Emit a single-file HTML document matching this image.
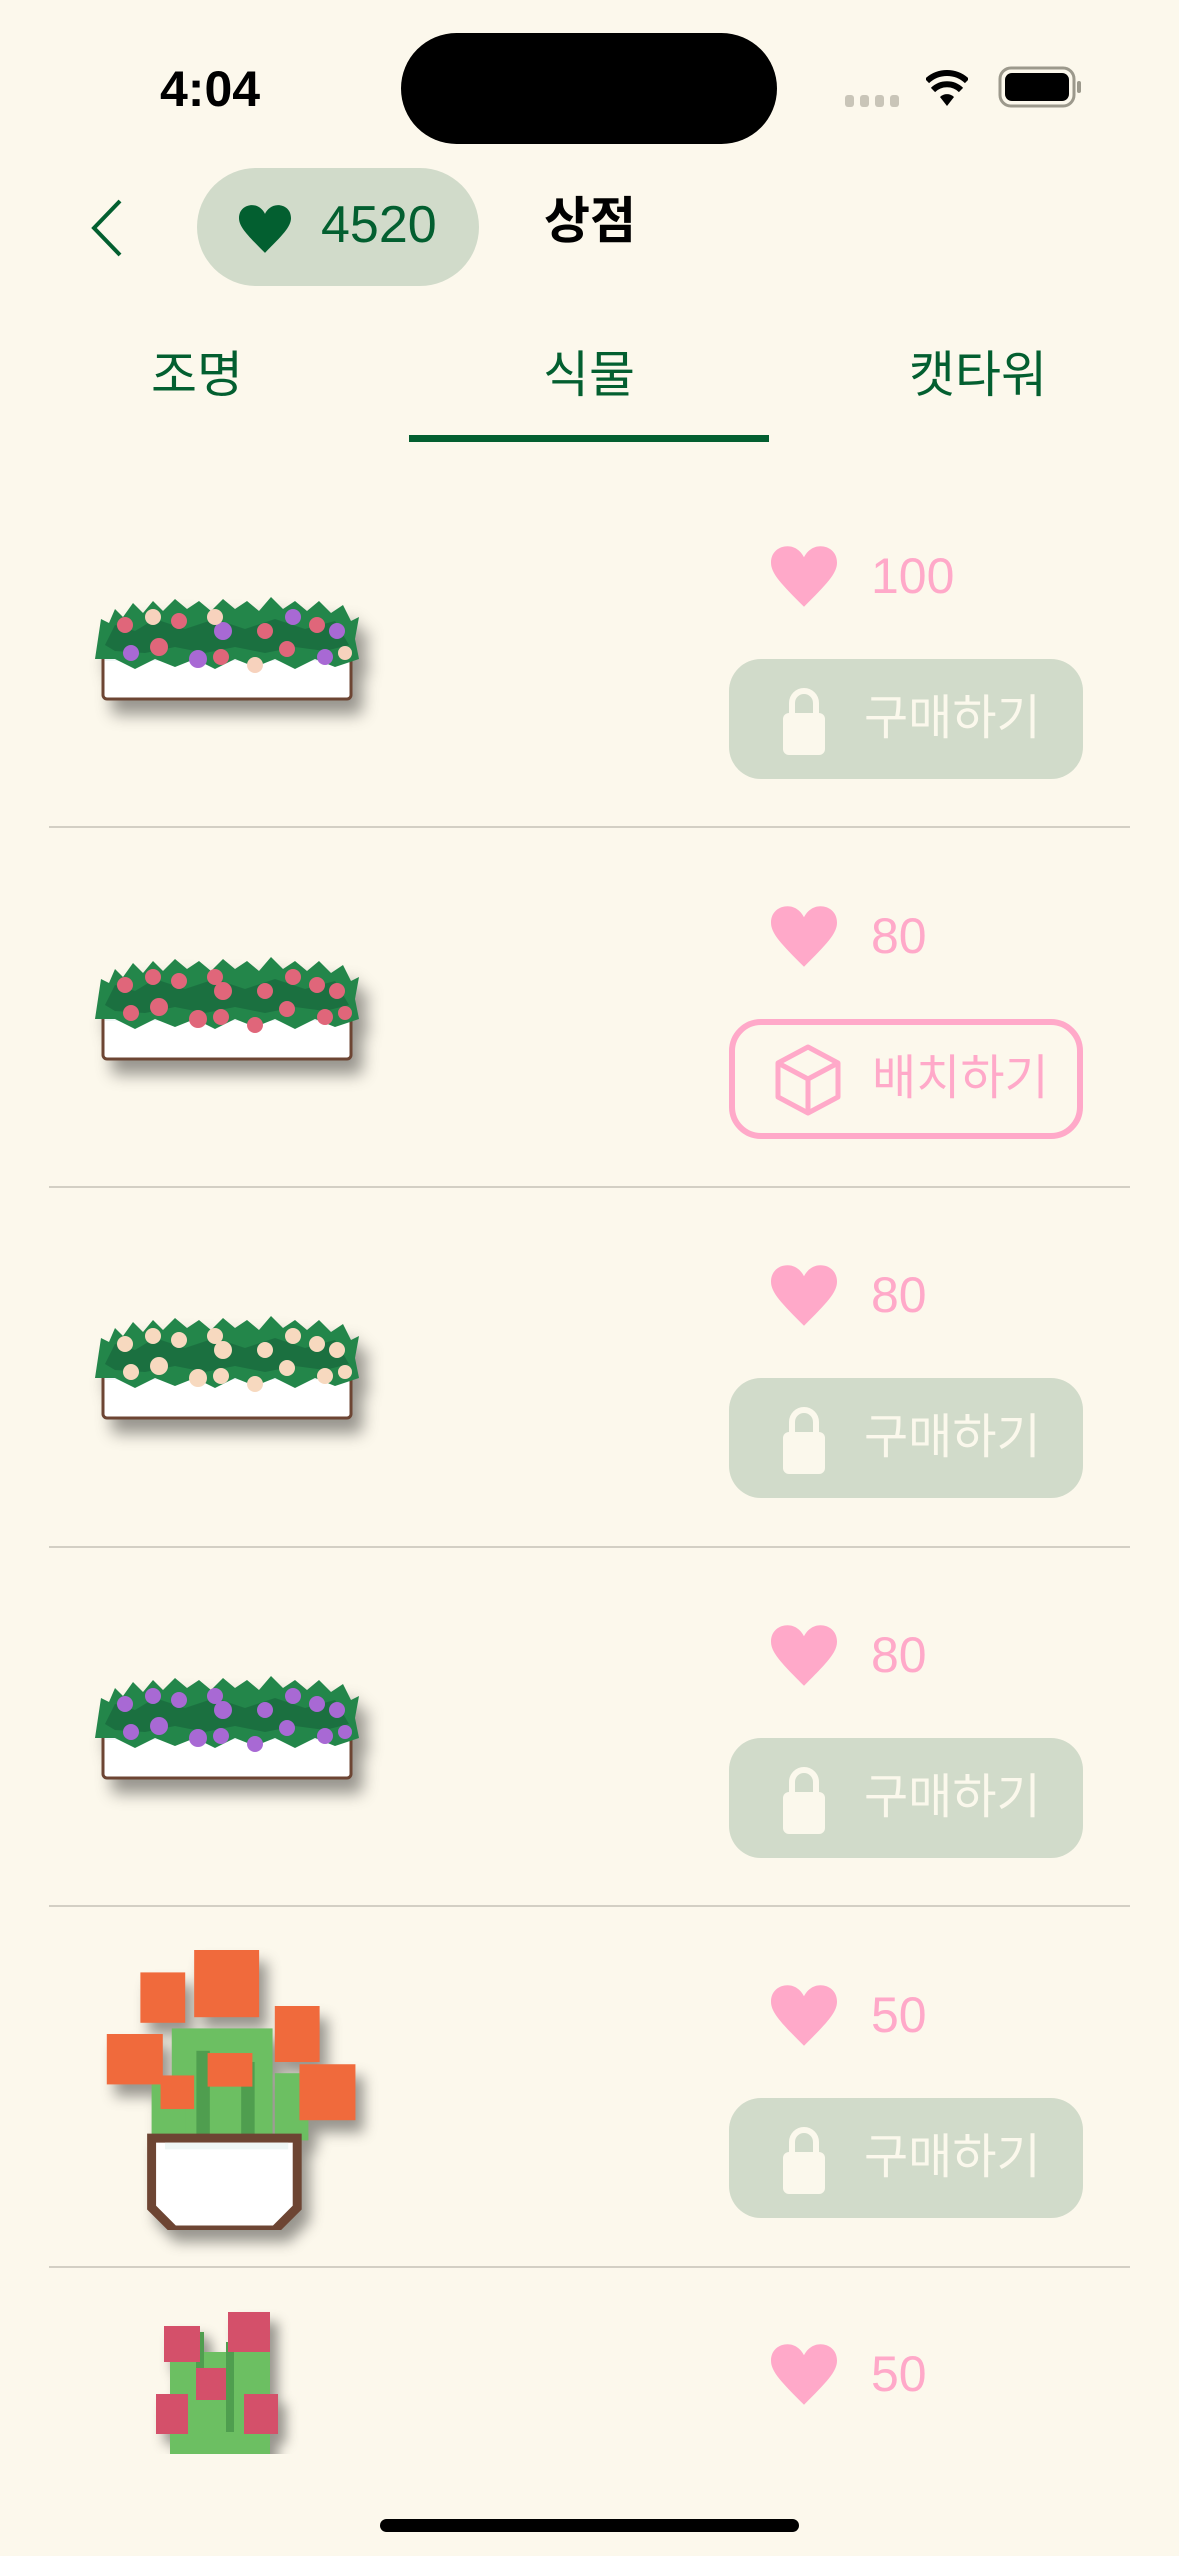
<!DOCTYPE html>
<html><head><meta charset="utf-8">
<style>
*{margin:0;padding:0;box-sizing:border-box}
body{width:1179px;height:2556px;background:#fcf8ec;position:relative;overflow:hidden;font-family:"Liberation Sans","Noto Sans CJK KR",sans-serif}
.a{position:absolute}
.tab{position:absolute;top:335px;font-size:50px;color:#035f30;transform:translateX(-50%);white-space:nowrap}
.sep{position:absolute;left:49px;width:1081px;height:2px;background:#d3cfc4}
.price{position:absolute;left:871px;font-size:50px;color:#ffa9c9;line-height:1}
.btn{position:absolute;left:729px;width:354px;height:120px;border-radius:32px;background:#d1dbca;color:#fbf8ec;font-size:48px}
.btn span{position:absolute;left:135px;top:50%;transform:translateY(-50%);line-height:1}
.btn.o{background:none;border:6px solid #ffa9c9;color:#ffa9c9}
.btn.o span{left:137px}
</style></head><body>
<div class="a" style="left:160px;top:60px;font-size:50px;font-weight:bold;color:#000">4:04</div>
<div class="a" style="left:401px;top:33px;width:376px;height:111px;border-radius:56px;background:#000"></div>
<div class="a" style="left:845px;top:95px">
<svg width="60" height="14"><g fill="#c9c5b8"><rect x="0" y="0" width="9" height="12" rx="3"/><rect x="15" y="0" width="9" height="12" rx="3"/><rect x="30" y="0" width="9" height="12" rx="3"/><rect x="45" y="0" width="9" height="12" rx="3"/></g></svg></div>
<svg class="a" style="left:926px;top:68px" width="42" height="38" viewBox="0 0 42 38"><path d="M21 38 L14 29 A10 10 0 0 1 28 29Z" fill="#000"/><path d="M7 22 A20 20 0 0 1 35 22" stroke="#000" stroke-width="6" fill="none"/><path d="M1 13 A29 29 0 0 1 41 13" stroke="#000" stroke-width="6" fill="none"/></svg>
<svg class="a" style="left:998px;top:66px" width="84" height="42" viewBox="0 0 84 42"><rect x="2" y="2" width="74" height="38" rx="11" fill="none" stroke="#9c998c" stroke-width="3"/><rect x="7" y="7" width="64" height="28" rx="7" fill="#000"/><rect x="79" y="15" width="4" height="12" rx="2" fill="#9c998c"/></svg>
<svg class="a" style="left:88px;top:198px" width="36" height="60" viewBox="0 0 36 60"><path d="M32 3 L6 30 L32 57" fill="none" stroke="#035f30" stroke-width="4"/></svg>
<div class="a" style="left:197px;top:168px;width:282px;height:118px;border-radius:59px;background:#d1dbca"></div>
<svg class="a" style="left:239px;top:205px" width="52" height="48" viewBox="0 0 24 22"><path d="M12 22 C4 14 0 10 0 6 C0 2 3 0 6 0 C9 0 11 2 12 4 C13 2 15 0 18 0 C21 0 24 2 24 6 C24 10 20 14 12 22Z" fill="#035f30"/></svg>
<div class="a" style="left:321px;top:199px;font-size:52px;color:#035f30;line-height:1">4520</div>
<div class="a" style="left:544px;top:196px;font-size:50px;font-weight:bold;color:#000;line-height:1">상점</div>
<div class="tab" style="left:197px">조명</div>
<div class="tab" style="left:589px">식물</div>
<div class="tab" style="left:978px">캣타워</div>
<div class="a" style="left:409px;top:435px;width:360px;height:7px;background:#035f30"></div>

<svg width="0" height="0" style="position:absolute">
<defs>
<symbol id="box" viewBox="0 0 264 106">
<rect x="8" y="56" width="248" height="48" rx="4" fill="#fff" stroke="#6d4533" stroke-width="3"/>
<rect x="10" y="58" width="244" height="8" fill="#eef6f5"/>
<path d="M0 64 L6 24 L14 28 L20 14 L28 22 L38 8 L48 18 L58 6 L68 16 L80 4 L92 14 L104 6 L116 16 L128 4 L140 14 L152 6 L164 16 L176 2 L188 14 L200 6 L212 16 L224 6 L236 18 L248 10 L256 26 L264 22 L260 44 L264 64 L240 72 L220 64 L200 74 L180 64 L160 72 L140 64 L120 74 L100 64 L80 72 L60 64 L40 74 L20 64Z" fill="#23864a"/>
<path d="M10 50 L20 30 L40 36 L60 24 L90 34 L120 24 L150 34 L180 24 L210 34 L240 26 L254 50 L230 56 L200 52 L170 58 L140 52 L110 58 L80 52 L50 58 L20 56Z" fill="#1b7040"/>
</symbol>
</defs></svg>

<svg class="a" style="left:95px;top:595px;filter:drop-shadow(10px 14px 8px rgba(0,0,0,.4))" width="264" height="106"><use href="#box"/>
<g><circle cx="30" cy="30" r="8" fill="#e0667a"/><circle cx="58" cy="22" r="8" fill="#f7d2bd"/><circle cx="84" cy="26" r="8" fill="#e0667a"/><circle cx="128" cy="36" r="9" fill="#a869d4"/><circle cx="120" cy="22" r="8" fill="#f7d2bd"/><circle cx="170" cy="36" r="8" fill="#e0667a"/><circle cx="198" cy="22" r="8" fill="#a869d4"/><circle cx="222" cy="30" r="8" fill="#e0667a"/><circle cx="242" cy="36" r="8" fill="#a869d4"/><circle cx="36" cy="58" r="8" fill="#a869d4"/><circle cx="64" cy="52" r="9" fill="#e0667a"/><circle cx="103" cy="64" r="9" fill="#a869d4"/><circle cx="126" cy="62" r="8" fill="#e0667a"/><circle cx="160" cy="70" r="8" fill="#f7d2bd"/><circle cx="192" cy="54" r="8" fill="#e0667a"/><circle cx="230" cy="62" r="8" fill="#a869d4"/><circle cx="250" cy="58" r="7" fill="#f7d2bd"/></g></svg>
<svg class="a" style="left:771px;top:546px" width="66" height="61" viewBox="0 0 24 22"><path d="M12 22 C4 14 0 10 0 6 C0 2 3 0 6 0 C9 0 11 2 12 4 C13 2 15 0 18 0 C21 0 24 2 24 6 C24 10 20 14 12 22Z" fill="#ffa9c9"/></svg>
<div class="price" style="top:551px">100</div>
<div class="btn" style="top:659px"><svg class="a" style="left:52px;top:26px" width="46" height="72" viewBox="0 0 46 72"><path d="M11 30 V18 A12 12 0 0 1 35 18 V30" fill="none" stroke="#fbf8ec" stroke-width="6"/><rect x="2" y="28" width="42" height="42" rx="6" fill="#fbf8ec"/></svg><span>구매하기</span></div>
<div class="sep" style="top:826px"></div>

<svg class="a" style="left:95px;top:955px;filter:drop-shadow(10px 14px 8px rgba(0,0,0,.4))" width="264" height="106"><use href="#box"/>
<g fill="#e0667a"><circle cx="30" cy="30" r="8"/><circle cx="58" cy="22" r="8"/><circle cx="84" cy="26" r="8"/><circle cx="128" cy="36" r="9"/><circle cx="120" cy="22" r="8"/><circle cx="170" cy="36" r="8"/><circle cx="198" cy="22" r="8"/><circle cx="222" cy="30" r="8"/><circle cx="242" cy="36" r="8"/><circle cx="36" cy="58" r="8"/><circle cx="64" cy="52" r="9"/><circle cx="103" cy="64" r="9"/><circle cx="126" cy="62" r="8"/><circle cx="160" cy="70" r="8"/><circle cx="192" cy="54" r="8"/><circle cx="230" cy="62" r="8"/><circle cx="250" cy="58" r="7"/></g></svg>
<svg class="a" style="left:771px;top:906px" width="66" height="61" viewBox="0 0 24 22"><path d="M12 22 C4 14 0 10 0 6 C0 2 3 0 6 0 C9 0 11 2 12 4 C13 2 15 0 18 0 C21 0 24 2 24 6 C24 10 20 14 12 22Z" fill="#ffa9c9"/></svg>
<div class="price" style="top:911px">80</div>
<div class="btn o" style="top:1019px"><svg class="a" style="left:38px;top:18px" width="70" height="74" viewBox="0 0 70 74"><g fill="none" stroke="#ffa9c9" stroke-width="5" stroke-linejoin="round"><path d="M35 4 L65 20 V54 L35 70 L5 54 V20Z"/><path d="M5 20 L35 36 L65 20 M35 36 V70"/></g></svg><span>배치하기</span></div>
<div class="sep" style="top:1186px"></div>

<svg class="a" style="left:95px;top:1314px;filter:drop-shadow(10px 14px 8px rgba(0,0,0,.4))" width="264" height="106"><use href="#box"/>
<g fill="#f7d9bf"><circle cx="30" cy="30" r="8"/><circle cx="58" cy="22" r="8"/><circle cx="84" cy="26" r="8"/><circle cx="128" cy="36" r="9"/><circle cx="120" cy="22" r="8"/><circle cx="170" cy="36" r="8"/><circle cx="198" cy="22" r="8"/><circle cx="222" cy="30" r="8"/><circle cx="242" cy="36" r="8"/><circle cx="36" cy="58" r="8"/><circle cx="64" cy="52" r="9"/><circle cx="103" cy="64" r="9"/><circle cx="126" cy="62" r="8"/><circle cx="160" cy="70" r="8"/><circle cx="192" cy="54" r="8"/><circle cx="230" cy="62" r="8"/><circle cx="250" cy="58" r="7"/></g></svg>
<svg class="a" style="left:771px;top:1265px" width="66" height="61" viewBox="0 0 24 22"><path d="M12 22 C4 14 0 10 0 6 C0 2 3 0 6 0 C9 0 11 2 12 4 C13 2 15 0 18 0 C21 0 24 2 24 6 C24 10 20 14 12 22Z" fill="#ffa9c9"/></svg>
<div class="price" style="top:1270px">80</div>
<div class="btn" style="top:1378px"><svg class="a" style="left:52px;top:26px" width="46" height="72" viewBox="0 0 46 72"><path d="M11 30 V18 A12 12 0 0 1 35 18 V30" fill="none" stroke="#fbf8ec" stroke-width="6"/><rect x="2" y="28" width="42" height="42" rx="6" fill="#fbf8ec"/></svg><span>구매하기</span></div>
<div class="sep" style="top:1546px"></div>

<svg class="a" style="left:95px;top:1674px;filter:drop-shadow(10px 14px 8px rgba(0,0,0,.4))" width="264" height="106"><use href="#box"/>
<g fill="#a869d4"><circle cx="30" cy="30" r="8"/><circle cx="58" cy="22" r="8"/><circle cx="84" cy="26" r="8"/><circle cx="128" cy="36" r="9"/><circle cx="120" cy="22" r="8"/><circle cx="170" cy="36" r="8"/><circle cx="198" cy="22" r="8"/><circle cx="222" cy="30" r="8"/><circle cx="242" cy="36" r="8"/><circle cx="36" cy="58" r="8"/><circle cx="64" cy="52" r="9"/><circle cx="103" cy="64" r="9"/><circle cx="126" cy="62" r="8"/><circle cx="160" cy="70" r="8"/><circle cx="192" cy="54" r="8"/><circle cx="230" cy="62" r="8"/><circle cx="250" cy="58" r="7"/></g></svg>
<svg class="a" style="left:771px;top:1625px" width="66" height="61" viewBox="0 0 24 22"><path d="M12 22 C4 14 0 10 0 6 C0 2 3 0 6 0 C9 0 11 2 12 4 C13 2 15 0 18 0 C21 0 24 2 24 6 C24 10 20 14 12 22Z" fill="#ffa9c9"/></svg>
<div class="price" style="top:1630px">80</div>
<div class="btn" style="top:1738px"><svg class="a" style="left:52px;top:26px" width="46" height="72" viewBox="0 0 46 72"><path d="M11 30 V18 A12 12 0 0 1 35 18 V30" fill="none" stroke="#fbf8ec" stroke-width="6"/><rect x="2" y="28" width="42" height="42" rx="6" fill="#fbf8ec"/></svg><span>구매하기</span></div>
<div class="sep" style="top:1905px"></div>

<svg class="a" style="left:100px;top:1950px;filter:drop-shadow(8px 12px 7px rgba(0,0,0,.4))" width="260" height="280" viewBox="0 0 220 250">
<g fill="#6cbf62"><rect x="58" y="70" width="90" height="110"/><rect x="40" y="120" width="30" height="50"/><rect x="150" y="110" width="30" height="60"/></g>
<g fill="#4f9e4f"><rect x="80" y="90" width="12" height="90"/><rect x="120" y="100" width="12" height="80"/></g>
<g fill="#f06a3c"><rect x="78" y="0" width="58" height="60"/><rect x="30" y="20" width="40" height="45"/><rect x="0" y="75" width="50" height="45"/><rect x="150" y="50" width="40" height="50"/><rect x="172" y="102" width="50" height="50"/><rect x="90" y="92" width="40" height="30"/><rect x="48" y="112" width="30" height="30"/></g>
<path d="M40 168 H170 V230 L150 250 H60 L40 230Z" fill="#fff" stroke="#6d4533" stroke-width="8"/>
<rect x="52" y="172" width="110" height="6" fill="#eef6f5"/>
</svg>
<svg class="a" style="left:771px;top:1985px" width="66" height="61" viewBox="0 0 24 22"><path d="M12 22 C4 14 0 10 0 6 C0 2 3 0 6 0 C9 0 11 2 12 4 C13 2 15 0 18 0 C21 0 24 2 24 6 C24 10 20 14 12 22Z" fill="#ffa9c9"/></svg>
<div class="price" style="top:1990px">50</div>
<div class="btn" style="top:2098px"><svg class="a" style="left:52px;top:26px" width="46" height="72" viewBox="0 0 46 72"><path d="M11 30 V18 A12 12 0 0 1 35 18 V30" fill="none" stroke="#fbf8ec" stroke-width="6"/><rect x="2" y="28" width="42" height="42" rx="6" fill="#fbf8ec"/></svg><span>구매하기</span></div>
<div class="sep" style="top:2266px"></div>

<div class="a" style="left:140px;top:2300px;width:200px;height:154px;overflow:hidden">
<svg style="position:absolute;left:16px;top:12px;filter:drop-shadow(8px 10px 6px rgba(0,0,0,.4))" width="130" height="160" viewBox="0 0 130 160">
<rect x="14" y="40" width="100" height="120" fill="#6cbf62"/><rect x="40" y="20" width="8" height="60" fill="#4f9e4f"/><rect x="70" y="30" width="8" height="90" fill="#4f9e4f"/>
<g fill="#d4506a"><rect x="8" y="14" width="36" height="36"/><rect x="72" y="0" width="42" height="40"/><rect x="40" y="56" width="30" height="32"/><rect x="0" y="82" width="32" height="40"/><rect x="88" y="82" width="34" height="40"/></g>
</svg></div>
<svg class="a" style="left:771px;top:2344px" width="66" height="61" viewBox="0 0 24 22"><path d="M12 22 C4 14 0 10 0 6 C0 2 3 0 6 0 C9 0 11 2 12 4 C13 2 15 0 18 0 C21 0 24 2 24 6 C24 10 20 14 12 22Z" fill="#ffa9c9"/></svg>
<div class="price" style="top:2349px">50</div>

<div class="a" style="left:380px;top:2519px;width:419px;height:13px;border-radius:7px;background:#000"></div>
</body></html>
